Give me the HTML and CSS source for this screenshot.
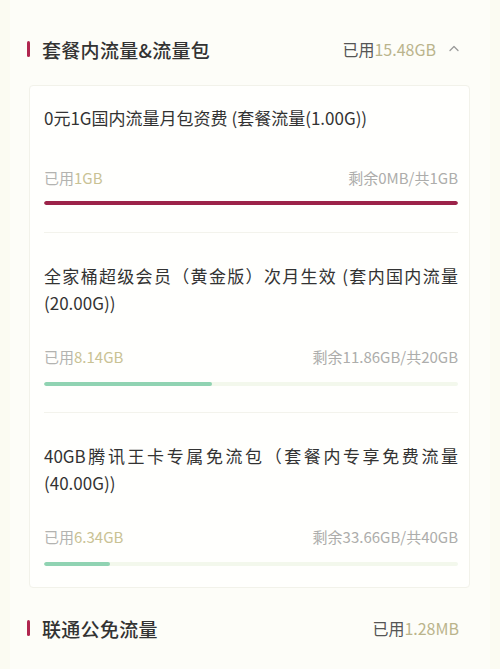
FILE: index.html
```html
<!DOCTYPE html>
<html lang="zh-CN">
<head>
<meta charset="utf-8">
<title>流量</title>
<link rel="stylesheet" href="styles.css">
</head>
<body>
<div class="page">
  <div class="section-header first">
    <div class="section-title"><span class="mark"></span>套餐内流量&amp;流量包</div>
    <div class="section-used">
      <span class="label">已用</span><span class="num">15.48GB</span>
      <svg class="chev" width="12" height="8" viewBox="0 0 12 8"><path d="M2 6.5 L6 2.5 L10 6.5" fill="none" stroke="#9a9a9a" stroke-width="1.3" stroke-linecap="round" stroke-linejoin="round"/></svg>
    </div>
  </div>

  <div class="card">
    <div class="item item-first">
      <div class="item-title one-line">0元1G国内流量月包资费 (套餐流量(1.00G))</div>
      <div class="stats">
        <div class="used">已用<span class="num">1GB</span></div>
        <div class="remain">剩余0MB/共1GB</div>
      </div>
      <div class="track"><div class="fill red" style="width:100%"></div></div>
    </div>

    <div class="item">
      <div class="item-title">全家桶超级会员（黄金版）次月生效 (套内国内流量(20.00G))</div>
      <div class="stats">
        <div class="used">已用<span class="num">8.14GB</span></div>
        <div class="remain">剩余11.86GB/共20GB</div>
      </div>
      <div class="track"><div class="fill green" style="width:40.7%"></div></div>
    </div>

    <div class="item item-last">
      <div class="item-title">40GB腾讯王卡专属免流包（套餐内专享免费流量(40.00G))</div>
      <div class="stats">
        <div class="used">已用<span class="num">6.34GB</span></div>
        <div class="remain">剩余33.66GB/共40GB</div>
      </div>
      <div class="track"><div class="fill green" style="width:15.85%"></div></div>
    </div>
  </div>

  <div class="section-header second">
    <div class="section-title"><span class="mark"></span>联通公免流量</div>
    <div class="section-used">
      <span class="label">已用</span><span class="num">1.28MB</span>
    </div>
  </div>
</div>
</body>
</html>
```

FILE: styles.css
```css
html, body {
  margin: 0;
  padding: 0;
}
body {
  background: #fbfbf2;
  font-family: "Noto Sans CJK SC", "Noto Sans", sans-serif;
  color: #333;
  width: 500px;
  height: 669px;
  overflow: hidden;
}
.page {
  margin: 0 10px;
  background: #fdfdf8;
  height: 669px;
  padding-top: 29px;
  box-sizing: border-box;
}
.section-header {
  display: flex;
  align-items: center;
  justify-content: space-between;
  height: 40px;
  padding: 0 30px 0 17px;
}
.section-header.second {
  margin-top: 20px;
  padding-right: 31px;
}
.section-title {
  display: flex;
  align-items: center;
  font-size: 19px;
  font-weight: 500;
  color: #333;
  letter-spacing: 0.3px;
}
.mark {
  display: inline-block;
  width: 3px;
  height: 16px;
  border-radius: 1.5px;
  background: #b0264f;
  margin-right: 12px;
}
.section-used {
  display: flex;
  align-items: center;
  font-size: 16px;
}
.section-used .label {
  color: #555;
}
.section-used .num {
  color: #bab48c;
}
.chev {
  margin-left: 12px;
  margin-top: -2px;
}
.card {
  margin: 16px 20px 0 19px;
  background: #fffffd;
  border: 1px solid #f2f2ea;
  border-radius: 4px;
}
.item {
  margin: 0 11px 0 14px;
  padding: 29px 0 26px;
  border-top: 1px solid #f3f3ec;
}
.item-first {
  border-top: none;
  padding-top: 18px;
  padding-bottom: 27px;
}
.item-last {
  padding-bottom: 21px;
}
.item-title {
  font-size: 17px;
  line-height: 27px;
  color: #333;
  text-align: justify;
}
.stats {
  display: flex;
  justify-content: space-between;
  align-items: center;
  margin-top: 31px;
  font-size: 15px;
  line-height: 20px;
}
.one-line + .stats {
  margin-top: 37px;
}
.used {
  color: #b3b3b0;
}
.used .num {
  color: #c9c294;
}
.remain {
  color: #adadab;
}
.track {
  margin-top: 15px;
  height: 4px;
  border-radius: 2px;
  background: #f3f8ec;
  overflow: hidden;
}
.one-line ~ .track {
  margin-top: 13px;
}
.fill {
  height: 100%;
  border-radius: 2px;
}
.fill.red {
  background: #9c2349;
}
.fill.green {
  background: #90d3b2;
}
```
